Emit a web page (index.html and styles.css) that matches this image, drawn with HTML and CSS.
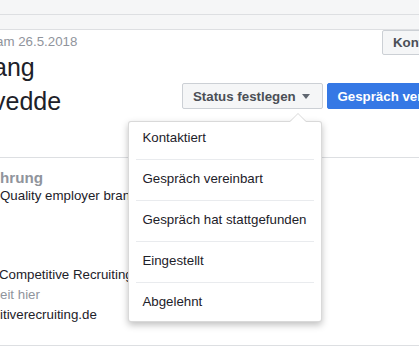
FILE: index.html
```html
<!DOCTYPE html>
<html lang="de">
<head>
    <meta charset="UTF-8">
    <meta name="viewport" content="width=device-width, initial-scale=1.0">
    <title>Kandidat - Profil</title>
    <link rel="stylesheet" href="styles.css">
</head>
<body>
    <div class="topbar"></div>
    <div class="subbar"></div>

    <div class="page">
        <div class="head">
            <div class="who">
                <div class="added">am 26.5.2018</div>
                <h1 class="name">
                    <span class="first">ang</span>
                    <span class="last">vedde</span>
                </h1>
            </div>

            <button class="btn contact-btn">Kontakt aufnehmen</button>

            <div class="actions">
                <div class="status">
                    <button class="btn">Status festlegen <span class="caret"></span></button>
                    <ul class="menu">
                        <li>Kontaktiert</li>
                        <li>Gespräch vereinbart</li>
                        <li>Gespräch hat stattgefunden</li>
                        <li>Eingestellt</li>
                        <li>Abgelehnt</li>
                    </ul>
                </div>
                <button class="btn btn-primary">Gespräch vereinbaren</button>
            </div>
        </div>

        <div class="section">
            <h2>hrung</h2>
            <div class="job">
                <div>Quality employer branding</div>
            </div>
            <div class="job">
                <div class="cut">Competitive Recruiting</div>
                <div class="muted">eit hier</div>
                <div>itiverecruiting.de</div>
            </div>
        </div>
    </div>
</body>
</html>
```

FILE: styles.css
```css
body {
    margin: 0;
    font-family: "Liberation Sans", Arial, sans-serif;
    font-size: 13.3px;
    color: #1d2129;
    background: white;
    overflow: hidden;
}
.topbar {
    height: 14px;
    background: #f5f6f7;
    border-bottom: 1px solid #dddfe2;
}
.subbar {
    height: 14px;
    background: #f5f6f7;
    border-bottom: 1px solid #dddfe2;
}
.page {
    width: 600px;
}

/* header */
.head {
    display: grid;
    grid-template-columns: 182px auto;
    grid-template-rows: 25px auto;
    padding-bottom: 39px;
    border-bottom: 1px solid #dddfe2;
}
.who {
    grid-row: 1 / 3;
}
.added {
    margin-top: 4px;
    line-height: 16px;
    color: #90949c;
    text-indent: -4px;
}
.name {
    margin: 0;
    font-size: 25px;
    font-weight: normal;
    line-height: 34px;
}
.name span {
    display: block;
    text-indent: -7px;
}
.btn {
    font-family: inherit;
    font-size: 13.3px;
    font-weight: bold;
    height: 26px;
    padding: 0 12px 0 10px;
    background: #f5f6f7;
    color: #4b4f56;
    border: 1px solid #ccd0d5;
    border-radius: 2px;
    white-space: nowrap;
    cursor: pointer;
}
.contact-btn {
    justify-self: start;
    height: 25px;
    margin-left: 200px;
}
.actions {
    display: flex;
    align-self: start;
    gap: 4px;
    margin-top: 28px;
}
.status {
    position: relative;
}
.caret {
    display: inline-block;
    margin-left: 3px;
    border-left: 4px solid transparent;
    border-right: 4px solid transparent;
    border-top: 5px solid #606770;
    vertical-align: middle;
}
.btn-primary {
    background: #3578e5;
    border-color: #3578e5;
    color: white;
    padding: 0 10px 0 9px;
}

/* dropdown */
.menu {
    position: absolute;
    right: 1px;
    top: 38px;
    width: 178px;
    margin: 0;
    padding: 0 7px;
    list-style: none;
    background: white;
    border: 1px solid rgba(0,0,0,0.15);
    border-radius: 3px;
    box-shadow: 0 3px 7px rgba(0,0,0,0.25);
}
.menu::before,
.menu::after {
    content: "";
    position: absolute;
    right: 15px;
    border-left: 8px solid transparent;
    border-right: 8px solid transparent;
}
.menu::before {
    top: -9px;
    border-bottom: 8px solid rgba(0,0,0,0.15);
}
.menu::after {
    top: -8px;
    border-bottom: 8px solid white;
}
.menu li {
    line-height: 38px;
    padding: 0 6px 2px;
    border-top: 1px solid #e9ebee;
    color: #1d2129;
}
.menu li:first-child {
    border-top: none;
    line-height: 32px;
    padding-bottom: 5px;
}
.menu li:last-child {
    padding-bottom: 0;
}

/* experience */
.section {
    padding: 11px 0 20px;
    border-bottom: 1px solid #dddfe2;
}
.section h2 {
    margin: 0;
    font-size: 15.2px;
    line-height: 17px;
    color: #90949c;
}
.job {
    line-height: 20px;
}
.job:first-of-type {
    min-height: 79px;
}
.cut {
    text-indent: -1px;
}
.muted {
    color: #90949c;
}
```
